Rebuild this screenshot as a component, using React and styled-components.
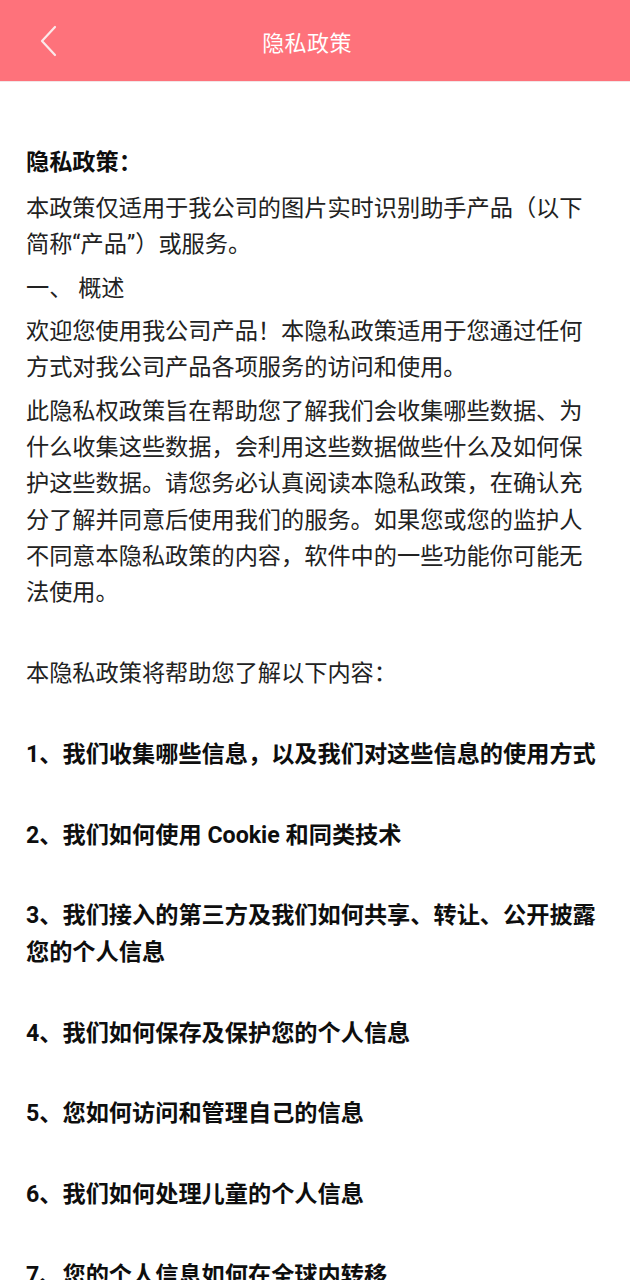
import React from "react";
import styled, { createGlobalStyle } from "styled-components";

const GlobalStyle = createGlobalStyle`
  html, body { margin: 0; padding: 0; background: #ffffff; }
  body { font-family: Roboto, "Noto Sans CJK SC", sans-serif; -webkit-font-smoothing: antialiased; }
  * { box-sizing: border-box; }
`;

const Page = styled.div`
  width: 630px;
  min-height: 1280px;
  background: #ffffff;
`;

const Header = styled.header`
  height: 82px;
  background: #fe727b;
  display: flex;
  align-items: center;
  border-bottom: 1px solid #f1e6e7;
`;

const BackButton = styled.button`
  width: 96px;
  height: 81px;
  padding: 0 0 0 40px;
  border: none;
  background: transparent;
  display: flex;
  align-items: center;
  flex-shrink: 0;
  cursor: pointer;
`;

const Title = styled.h1`
  flex: 1;
  margin: 0;
  padding-right: 112px;
  text-align: center;
  font-family: Roboto, "Noto Sans CJK SC", sans-serif;
  font-weight: 400;
  font-size: 22px;
  color: #ffffff;
  letter-spacing: 0.4px;
`;

const Content = styled.main`
  padding: 62px 29px 40px 26px;
  display: flex;
  flex-direction: column;
  gap: 7.3px;
`;

const Para = styled.p`
  margin: 0;
  margin-bottom: ${(p) => (p.$heading ? "2.5px" : "0")};
  padding-top: ${(p) => (p.$spaced ? "37.4px" : "0")};
  font-size: 23.2px;
  line-height: 36.2px;
  font-weight: ${(p) => (p.$bold ? 700 : 400)};
  color: ${(p) => (p.$bold ? "#0e0e0e" : "#222222")};
  font-family: Roboto, "Noto Sans CJK SC", sans-serif;
`;

const ChevronLeft = () => (
  <svg width="18" height="32" viewBox="0 0 18 32" fill="none">
    <polyline
      points="15,2 2,16 15,30"
      stroke="#fbe9ea"
      strokeWidth="2.2"
      strokeLinecap="round"
      strokeLinejoin="round"
    />
  </svg>
);

const items = [
  "1、我们收集哪些信息，以及我们对这些信息的使用方式",
  "2、我们如何使用 Cookie 和同类技术",
  "3、我们接入的第三方及我们如何共享、转让、公开披露您的个人信息",
  "4、我们如何保存及保护您的个人信息",
  "5、您如何访问和管理自己的信息",
  "6、我们如何处理儿童的个人信息",
  "7、您的个人信息如何在全球内转移",
  "8、本隐私政策如何更新",
  "9、如何联系我们",
];

export default function App() {
  return (
    <Page>
      <GlobalStyle />
      <Header>
        <BackButton aria-label="返回">
          <ChevronLeft />
        </BackButton>
        <Title>隐私政策</Title>
      </Header>
      <Content>
        <Para $bold $heading>隐私政策：</Para>
        <Para>本政策仅适用于我公司的图片实时识别助手产品（以下简称“产品”）或服务。</Para>
        <Para>一、 概述</Para>
        <Para>欢迎您使用我公司产品！本隐私政策适用于您通过任何方式对我公司产品各项服务的访问和使用。</Para>
        <Para>
          此隐私权政策旨在帮助您了解我们会收集哪些数据、为什么收集这些数据，会利用这些数据做些什么及如何保护这些数据。请您务必认真阅读本隐私政策，在确认充分了解并同意后使用我们的服务。如果您或您的监护人不同意本隐私政策的内容，软件中的一些功能你可能无法使用。
        </Para>
        <Para $spaced>本隐私政策将帮助您了解以下内容：</Para>
        {items.map((t) => (
          <Para key={t} $bold $spaced>{t}</Para>
        ))}
      </Content>
    </Page>
  );
}
